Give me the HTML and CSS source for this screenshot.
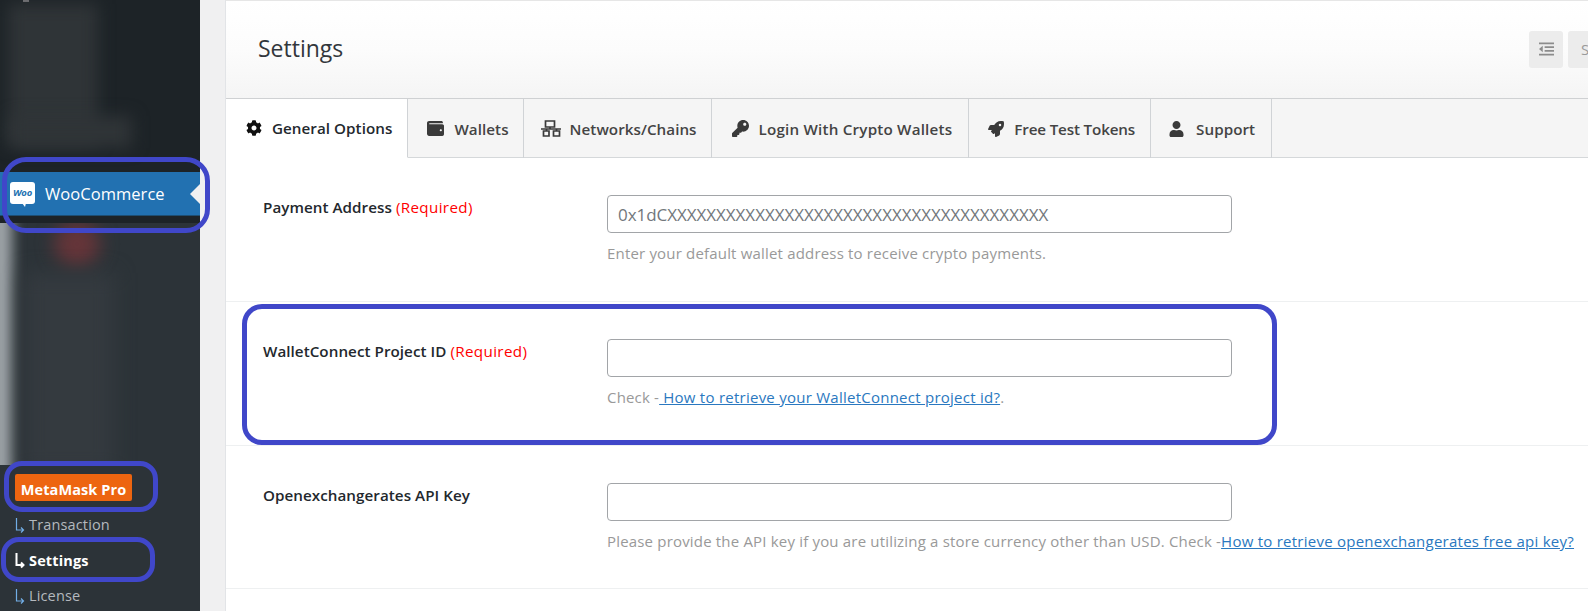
FILE: index.html
```html
<!DOCTYPE html>
<html lang="en">
<head>
<meta charset="utf-8">
<title>Settings</title>
<link rel="stylesheet" href="styles.css">
</head>
<body>
<div class="app">
  <aside class="sidebar">
    <div class="side-top"><div class="speck"></div><div class="blur-top"></div><div class="blur-top-low"></div></div>
    <div class="woo-item">
      <span class="woo-logo"><span class="woo-logo-text">Woo</span></span>
      <span class="woo-label">WooCommerce</span>
      <span class="woo-arrow"></span>
    </div>
    <div class="side-gap"></div>
    <div class="side-blur">
      <div class="blur-left"></div>
      <div class="blur-red"></div>
      <div class="blur-mid"></div>
    </div>
    <div class="sub">
      <span class="badge">MetaMask Pro</span>
      <a class="sub-link"><svg class="sub-arrow" viewBox="0 0 10 17"><path d="M1.500 0V12H8M6 9.500L8.500 12 6 14.500"/></svg>Transaction</a>
      <a class="sub-link current"><svg class="sub-arrow" viewBox="0 0 10 17"><path d="M1.500 0V12H8M6 9.500L8.500 12 6 14.500"/></svg>Settings</a>
      <a class="sub-link"><svg class="sub-arrow" viewBox="0 0 10 17"><path d="M1.500 0V12H8M6 9.500L8.500 12 6 14.500"/></svg>License</a>
    </div>
  </aside>
  <main class="panel">
    <header class="head">
      <h1 class="title">Settings</h1>
      <div class="head-actions">
        <span class="head-btn">
          <svg class="outdent" viewBox="0 0 16 14"><path d="M0 0h16v2H0zM6 4h10v2H6zM6 8h10v2H6zM0 12h16v2H0zM4 3.500v7L0 7z"/></svg>
        </span>
        <span class="head-btn save">Save</span>
      </div>
    </header>
    <nav class="tabs">
      <div class="tab active">
        <svg class="ico" viewBox="0 0 512 512"><path d="M487.4 315.7l-42.6-24.6c4.3-23.2 4.3-47 0-70.2l42.6-24.6c4.9-2.8 7.1-8.6 5.5-14-11.1-35.6-30-67.8-54.7-94.6-3.8-4.1-10-5.1-14.8-2.3L380.8 110c-17.9-15.4-38.5-27.3-60.8-35.1V25.8c0-5.6-3.9-10.5-9.4-11.7-36.7-8.2-74.3-7.8-109.2 0-5.5 1.2-9.4 6.1-9.4 11.7V75c-22.2 7.9-42.8 19.8-60.8 35.1L88.7 85.5c-4.9-2.8-11-1.9-14.8 2.3-24.7 26.7-43.6 58.9-54.7 94.6-1.7 5.4.6 11.2 5.5 14L67.3 221c-4.3 23.2-4.3 47 0 70.2l-42.6 24.6c-4.9 2.8-7.1 8.6-5.5 14 11.1 35.6 30 67.8 54.7 94.6 3.8 4.1 10 5.1 14.8 2.3l42.6-24.6c17.9 15.4 38.5 27.3 60.8 35.1v49.2c0 5.6 3.9 10.5 9.4 11.7 36.7 8.2 74.3 7.8 109.2 0 5.5-1.2 9.4-6.1 9.4-11.7v-49.2c22.2-7.9 42.8-19.8 60.8-35.1l42.6 24.6c4.9 2.8 11 1.9 14.8-2.3 24.7-26.7 43.6-58.9 54.7-94.6 1.5-5.5-.7-11.3-5.6-14.1zM256 336c-44.1 0-80-35.9-80-80s35.9-80 80-80 80 35.9 80 80-35.9 80-80 80z"/></svg>
        General Options
      </div>
      <div class="tab tab-wallet">
        <svg class="ico ico-wide" viewBox="0 0 512 512"><path d="M461.2 128H80c-8.84 0-16-7.16-16-16s7.16-16 16-16h384c8.84 0 16-7.16 16-16 0-26.51-21.49-48-48-48H64C28.65 32 0 60.65 0 96v320c0 35.35 28.65 64 64 64h397.2c28.02 0 50.8-21.53 50.8-48V176c0-26.47-22.78-48-50.8-48zM416 340c-17.67 0-32-14.33-32-32s14.33-32 32-32 32 14.33 32 32-14.33 32-32 32z"/></svg>
        Wallets
      </div>
      <div class="tab tab-net">
        <svg class="ico ico-net" viewBox="0 0 20 17"><path class="net-line" d="M4.500 1h9v6h-9zM2.500 11h5.500v5H2.500zM12.500 11h6v5h-6zM0 9h20M9 7v2M5.500 9v2M15.500 9v2"/></svg>
        Networks/Chains
      </div>
      <div class="tab tab-login">
        <svg class="ico ico-wide" viewBox="0 0 512 512"><path d="M512 176.001C512 273.203 433.202 352 336 352c-11.22 0-22.19-1.062-32.827-3.069l-24.012 27.014A23.999 23.999 0 0 1 261.223 384H224v40c0 13.255-10.745 24-24 24h-40v40c0 13.255-10.745 24-24 24H24c-13.255 0-24-10.745-24-24v-78.059c0-6.365 2.529-12.47 7.029-16.971l161.802-161.802C163.108 213.814 160 195.271 160 176 160 78.798 238.797.001 335.999 0 433.488-.001 512 78.511 512 176.001zM336 128c0 26.51 21.49 48 48 48s48-21.49 48-48-21.49-48-48-48-48 21.49-48 48z"/></svg>
        Login With Crypto Wallets
      </div>
      <div class="tab tab-free">
        <svg class="ico" viewBox="0 0 512 512"><path d="M505.12 19.09c-1.19-5.53-6.66-11-12.21-12.18C460.72 0 435.51 0 410.41 0 307.18 0 245.27 55.2 199.05 128H94.84c-16.35.02-35.56 11.88-42.89 26.48L2.52 253.3A28.4 28.4 0 0 0 0 264a24 24 0 0 0 24 24h103.82l-22.48 22.47c-11.36 11.36-13 32.26 0 45.25l50.9 50.9c11.16 11.19 32.16 13.16 45.28 0L224 384.16V488a24 24 0 0 0 24 24 28.56 28.56 0 0 0 10.71-2.52l98.73-49.39c14.63-7.3 26.5-26.5 26.5-42.86V312.8c72.6-46.31 128.04-108.41 128.04-211.1.1-25.2.1-50.4-6.86-82.61zM384.04 168a40 40 0 1 1 40.01-40 40.02 40.02 0 0 1-40.01 40z"/></svg>
        Free Test Tokens
      </div>
      <div class="tab tab-user">
        <svg class="ico ico-user" viewBox="0 0 448 512"><path d="M224 256c70.700 0 128-57.300 128-128S294.700 0 224 0 96 57.300 96 128s57.300 128 128 128zm89.600 32h-16.700c-22.200 10.200-46.900 16-72.900 16s-50.600-5.800-72.900-16h-16.700C60.200 288 0 348.200 0 422.400V464c0 26.500 21.500 48 48 48h352c26.500 0 48-21.500 48-48v-41.600c0-74.200-60.200-134.400-134.400-134.400z"/></svg>
        Support
      </div>
    </nav>
    <section class="row">
      <div class="label">Payment Address <span class="req">(Required)</span></div>
      <div class="field">
        <div class="input">0x1dCXXXXXXXXXXXXXXXXXXXXXXXXXXXXXXXXXXXXXXX</div>
        <p class="help">Enter your default wallet address to receive crypto payments.</p>
      </div>
    </section>
    <section class="row">
      <div class="label">WalletConnect Project ID <span class="req">(Required)</span></div>
      <div class="field">
        <div class="input"></div>
        <p class="help">Check -<a class="link">&nbsp;How to retrieve your WalletConnect project id?</a>.</p>
      </div>
    </section>
    <section class="row">
      <div class="label">Openexchangerates API Key</div>
      <div class="field">
        <div class="input"></div>
        <p class="help">Please provide the API key if you are utilizing a store currency other than USD. Check -<a class="link">How to retrieve openexchangerates free api key?</a></p>
      </div>
    </section>
  </main>
</div>
<div class="mark mark-woo"></div>
<div class="mark mark-meta"></div>
<div class="mark mark-settings"></div>
<div class="mark mark-wallet"></div>
</body>
</html>
```
FILE: styles.css
```css
* { box-sizing: border-box; }
html, body { margin: 0; height: 611px; overflow: hidden; background: #f0f0f1; }
body { font-family: "Open Sans", "Noto Sans", sans-serif; position: relative; }
.app { display: flex; height: 611px; overflow: hidden; }

.sidebar { width: 200px; flex: none; display: flex; flex-direction: column; background: #2c3338; overflow: hidden; }
.side-top { height: 172px; background: #1d2327; position: relative; overflow: hidden; flex: none; }
.speck { position: absolute; left: 23px; top: 0; width: 6px; height: 2px; background: #8c8a8e; }
.blur-top { position: absolute; left: 8px; top: 4px; width: 90px; height: 140px; background: #2f3437; filter: blur(8px); }
.blur-top-low { position: absolute; left: 10px; top: 116px; width: 122px; height: 32px; background: #2f3437; filter: blur(8px); }
.woo-item { height: 44px; flex: none; background: #2271b1; border-bottom: 1px solid #1e4e72; display: flex; align-items: center; padding-left: 10px; position: relative; }
.woo-logo { width: 25px; height: 22px; background: #fff; border-radius: 3px; display: flex; align-items: center; justify-content: center; position: relative; margin-top: -2px; }
.woo-logo::after { content: ""; position: absolute; left: 12px; bottom: -3px; border-top: 4px solid #fff; border-left: 3px solid transparent; border-right: 1px solid transparent; }
.woo-logo-text { font-size: 9.500px; font-style: italic; font-weight: 700; color: #2271b1; letter-spacing: -.2px; }
.woo-label { margin-left: 10px; font-size: 16.500px; color: #fff; letter-spacing: .05px; }
.woo-arrow { position: absolute; right: 0; top: 12px; border-right: 10px solid #f0f0f1; border-top: 10px solid transparent; border-bottom: 10px solid transparent; }
.side-gap { height: 7px; flex: none; background: #1d2327; }
.side-blur { height: 242px; flex: none; position: relative; overflow: hidden; background: #2c3338; }
.blur-left { position: absolute; left: -8px; top: -20px; bottom: -20px; width: 22px; background: linear-gradient(90deg, #c0c6c9, #737a7e); filter: blur(6px); }
.blur-red { position: absolute; left: 54px; top: -2px; width: 46px; height: 46px; border-radius: 50%; background: #653539; filter: blur(9px); }
.blur-mid { position: absolute; left: 24px; top: 50px; width: 90px; height: 200px; background: #343a3f; filter: blur(10px); }
.sub { flex: 1; display: flex; flex-direction: column; align-items: flex-start; padding: 9px 0 0 15px; }
.badge { width: 117px; height: 27px; padding-top: 3px; background: #ed6510; border-radius: 2px; color: #fff; font-size: 14.500px; font-weight: 700; letter-spacing: .1px; display: flex; align-items: center; justify-content: center; margin-bottom: 6px; }
.sub-link { height: 35.500px; display: flex; align-items: center; font-size: 14.500px; letter-spacing: .15px; color: #b4b9be; gap: 4px; }
.sub-link.current { color: #fff; font-weight: 700; }
.sub-arrow { width: 10px; height: 17px; fill: none; stroke: #72aee6; stroke-width: 1.200; margin-top: 3px; }
.sub-link.current .sub-arrow { stroke: #fff; stroke-width: 2; }

.panel { margin-left: 25px; flex: 1; min-width: 0; background: #fff; border-left: 1px solid #e2e4e7; display: flex; flex-direction: column; }
.head { height: 99px; flex: none; background: linear-gradient(180deg, #fff 0, #fcfcfc 50%, #f5f5f5 100%); border-top: 1px solid #e6e6e6; border-bottom: 1px solid #cfd1d3; display: flex; align-items: center; justify-content: space-between; padding-left: 32px; }
.title { margin: 0 0 3px; font-size: 23px; font-weight: 400; color: #32373c; }
.head-actions { display: flex; gap: 5px; margin-right: -14px; align-items: center; margin-top: -1px; }
.head-btn { width: 34px; height: 37px; background: #ececec; border-radius: 3px; display: flex; align-items: center; justify-content: center; color: #9a9a9a; font-size: 15px; overflow: hidden; }
.outdent { width: 15px; height: 14px; fill: #8c8c8c; }
.head-btn.save { justify-content: flex-start; padding-left: 13px; }

.tabs { height: 59px; flex: none; display: flex; background: #f5f5f5; border-bottom: 1px solid #d5d8da; }
.tab { display: flex; align-items: center; padding: 0 15px 0 19px; gap: 10px; font-size: 15.200px; font-weight: 600; color: #444; border-right: 1px solid #d0d3d6; letter-spacing: .05px; margin-bottom: -1px; }
.tab-wallet { padding-right: 14px; }
.tab-net { padding: 0 14px 0 17px; gap: 9px; }
.tab-login { padding: 0 16px 0 20px; letter-spacing: .2px; }
.tab-free { letter-spacing: -.15px; }
.tab-user { padding: 0 16px 0 18px; gap: 12px; }
.tab.active { background: #fff; color: #23282d; padding-left: 20px; border-bottom: 1px solid #fff; }
.ico { width: 16px; height: 16px; fill: #3a3a3a; flex: none; }
.ico-wide { width: 17px; height: 17px; }
.tab.active .ico { fill: #111; }
.ico-net { width: 20px; height: 17px; fill: none; }
.net-line { fill: none; stroke: #3a3a3a; stroke-width: 1.700; }
.ico-user { width: 15px; }

.row { height: 144px; flex: none; border-bottom: 1px solid #eef0f1; display: flex; padding: 37px 0 0 37px; }
.row:last-child { height: 143px; }
.label { width: 344px; flex: none; font-size: 15.200px; font-weight: 600; color: #23282d; line-height: 20px; letter-spacing: .05px; padding-top: 2px; }
.req { color: #f00; font-weight: 500; letter-spacing: .35px; }
.field { flex: 1; min-width: 0; }
.input { width: 625px; height: 38px; border: 1px solid #a2a5a8; border-radius: 4px; padding: 0 10px; font-size: 17px; line-height: 38px; color: #72777c; letter-spacing: -.05px; white-space: nowrap; overflow: hidden; }
.help { margin: 10px 0 0; font-size: 15px; line-height: 20px; color: #999; letter-spacing: .18px; white-space: nowrap; }
.link { color: #2a78c0; text-decoration: underline; letter-spacing: .25px; }

.mark { position: absolute; border: 5px solid #4047c9; }
.mark-woo { left: 2px; top: 157px; width: 208px; height: 76px; border-radius: 24px; }
.mark-meta { left: 4px; top: 461px; width: 154px; height: 51px; border-radius: 18px; }
.mark-settings { left: 1px; top: 537px; width: 154px; height: 45px; border-radius: 18px; }
.mark-wallet { left: 242px; top: 304px; width: 1035px; height: 141px; border-radius: 20px; }
```
